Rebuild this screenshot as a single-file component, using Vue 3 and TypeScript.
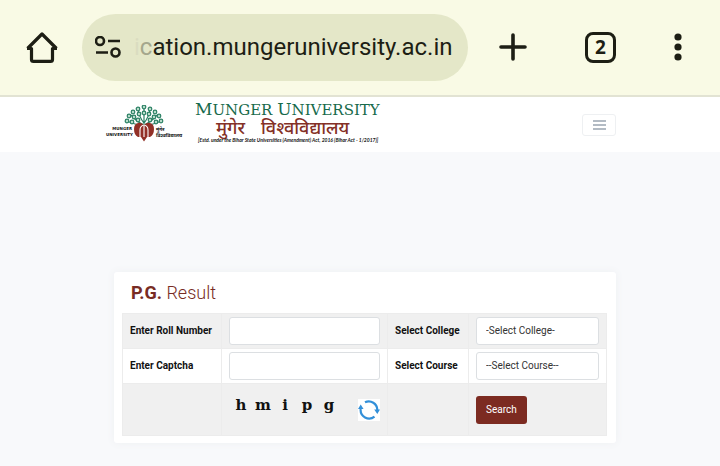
<script setup lang="ts">
import { ref } from 'vue'

const address = 'ication.mungeruniversity.ac.in'
const captcha = 'hmipg'
const rollNumber = ref('')
const captchaText = ref('')
const college = ref('')
const course = ref('')

const leaves: [number, number][] = [
  [3, 16], [5, 11], [9, 7], [10, 12], [14, 4], [15, 9], [14, 15], [20, 2],
  [20, 8], [26, 4], [25, 9], [26, 15], [31, 7], [30, 12], [35, 11],
  [37, 16], [8, 17], [32, 17],
]
</script>

<template>
  <div class="page">
    <header class="browser">
      <button class="icon" type="button" aria-label="Home">
        <svg width="32" height="32" viewBox="0 0 32 32" fill="none" stroke="currentColor" stroke-width="3.2" stroke-linejoin="round">
          <path d="M1 17.500H5.500V28.500Q5.500 30.400 7.500 30.400H24.500Q26.500 30.400 26.500 28.500V17.500H31M1.500 17.500 16 3 30.500 17.500" />
        </svg>
      </button>
      <div class="address">
        <svg width="26" height="22" viewBox="0 0 26 22" fill="none" stroke="currentColor" stroke-width="2.600">
          <circle cx="5" cy="5" r="4" /><path d="M13 5H25M1 16.500H13" /><circle cx="20.500" cy="16.500" r="4" />
        </svg>
        <span class="url"><span class="faint">{{ address.slice(0, 1) }}</span><span class="fade">{{ address.slice(1, 2) }}</span>{{ address.slice(2) }}</span>
      </div>
      <div class="actions">
        <button class="icon" type="button" aria-label="New tab">
          <svg width="28" height="28" viewBox="0 0 28 28" fill="none" stroke="currentColor" stroke-width="3.600" stroke-linecap="round"><path d="M14 2V26M2 14H26" /></svg>
        </button>
        <button class="icon tabs" type="button">2</button>
        <button class="icon" type="button" aria-label="Menu">
          <svg width="8" height="28" viewBox="0 0 8 28" fill="currentColor"><circle cx="4" cy="4" r="3.600" /><circle cx="4" cy="14" r="3.600" /><circle cx="4" cy="24" r="3.600" /></svg>
        </button>
      </div>
    </header>

    <nav class="site">
      <a class="brand" href="#">
        <span class="side left">MUNGER<br />UNIVERSITY</span>
        <svg class="tree" width="40" height="40" viewBox="0 0 40 40" fill="none">
          <g stroke="#2b8064" stroke-width="1.200">
            <path d="M20 20V4M20 20Q13 17 7 10M20 18Q15 12 14 4M20 20Q27 17 33 10M20 18Q25 12 26 4M19 20Q11 20 3 16M21 20Q29 20 37 16" />
            <circle v-for="([x, y], i) in leaves" :key="i" :cx="x" :cy="y" r="1.800" fill="#b9dccb" />
          </g>
          <path d="M20 20Q17 17 14 18Q10 19 10 24Q10 30 14 32H17L20 36.500L23 32H26Q30 30 30 24Q30 19 26 18Q23 17 20 20Z" fill="#923027" />
          <path d="M16 32V25Q16 21 20 20Q24 21 24 25V32M20 21V32" stroke="#fff" stroke-width="1.100" />
        </svg>
        <span class="side right">मुंगेर<br />विश्वविद्यालय</span>
        <span class="titles">
          <span class="name"><span class="cap">M</span>UNGER <span class="cap">U</span>NIVERSITY</span>
          <span class="hindi"><span>मुंगेर</span><span>विश्वविद्यालय</span></span>
          <span class="act">[Estd. under the Bihar State Universities (Amendment) Act, 2016 (Bihar Act - 1/2017)]</span>
        </span>
      </a>
      <button class="toggle" type="button" aria-label="Open navigation">
        <svg width="13" height="10" viewBox="0 0 13 10" stroke="#9ba5b1" stroke-width="1.700"><path d="M0 1H13M0 5H13M0 9H13" /></svg>
      </button>
    </nav>

    <main>
      <form class="card" @submit.prevent>
        <h1><b>P.G.</b> Result</h1>
        <table>
          <colgroup><col class="c1" /><col class="c2" /><col class="c3" /><col class="c4" /></colgroup>
          <tbody>
            <tr>
              <th><label for="roll">Enter Roll Number</label></th>
              <td><input id="roll" v-model="rollNumber" type="text" /></td>
              <th><label for="college">Select College</label></th>
              <td><select id="college" v-model="college"><option value="">-Select College-</option></select></td>
            </tr>
            <tr>
              <th><label for="captcha">Enter Captcha</label></th>
              <td><input id="captcha" v-model="captchaText" type="text" /></td>
              <th><label for="course">Select Course</label></th>
              <td><select id="course" v-model="course"><option value="">--Select Course--</option></select></td>
            </tr>
            <tr class="last">
              <td></td>
              <td>
                <div class="challenge">
                  <span class="letters"><span v-for="(c, i) in captcha" :key="i">{{ c }}</span></span>
                  <button class="refresh" type="button" aria-label="Refresh captcha">
                    <svg width="22" height="22" viewBox="0 0 22 22" fill="none" stroke="#3390d9" stroke-width="2.200">
                      <path d="M7 3.300A8.500 8.500 0 0 1 19.300 11M16.500 17.600A8.500 8.500 0 0 1 2.700 10" />
                      <path d="M16.200 10.500H22L19.300 15ZM0 10H5.600L2.700 5.500Z" fill="#3390d9" stroke="none" />
                    </svg>
                  </button>
                </div>
              </td>
              <td></td>
              <td><button class="search" type="submit">Search</button></td>
            </tr>
          </tbody>
        </table>
      </form>
    </main>
  </div>
</template>

<style>
body { margin: 0; background: #f8f9fb; }
</style>

<style scoped>
* { box-sizing: border-box; }
.page { min-height: 100vh; font-family: Roboto, "Noto Sans", sans-serif; color: #111; }
button { font: inherit; cursor: pointer; }
.browser {
  display: flex; align-items: center; height: 97px; padding: 0 38px 1px 26px;
  background: #f9fae5; border-bottom: 2px solid #e2e3d3; color: #1d1e14;
}
.icon { display: flex; align-items: center; justify-content: center; padding: 0; border: 0; background: none; color: inherit; }
.address {
  display: flex; align-items: center; gap: 13px; flex: 1; height: 67px;
  margin-left: 24px; padding: 0 13px; border-radius: 34px; background: #e4e7c8;
}
.address svg { flex: none; }
.url { font-size: 24px; line-height: 32px; white-space: nowrap; }
.faint { color: #dadcc0; }
.fade { color: #a5a78d; }
.actions { display: flex; align-items: center; justify-content: space-between; width: 183px; margin-left: 31px; }
.tabs { width: 31px; height: 31px; border: 3px solid currentColor; border-radius: 8px; font: 700 19px/24px "Open Sans", sans-serif; }
.site { display: flex; align-items: center; justify-content: space-between; height: 55px; padding: 0 104px 0 106px; background: #fff; }
.brand { display: flex; align-items: center; color: inherit; text-decoration: none; }
.side { width: 26px; padding-top: 15px; font: 700 4px/6px "DejaVu Sans", "Noto Sans", sans-serif; white-space: nowrap; }
.left { text-align: right; }
.right { font-size: 5px; }
.tree { margin: 0 -8px; }
.titles { display: flex; flex-direction: column; margin-left: 13px; padding-bottom: 2px; white-space: nowrap; }
.name { color: #176a4b; font: 15px/12px "DejaVu Serif", serif; }
.cap { font-size: 17px; }
.hindi { display: flex; gap: 16px; padding: 2px 0 0 21px; color: #843026; font: 500 18px/18px "Noto Sans", sans-serif; }
.act { padding-left: 3px; font: italic 700 5px/8px Lato, sans-serif; }
.toggle { display: flex; align-items: center; justify-content: center; width: 34px; height: 22px; padding: 0; border: 1px solid #eef0f2; border-radius: 3px; background: #fff; }
main { padding: 120px 104px 22px 114px; }
.card { padding: 8px 9px 7px 8px; border-radius: 3px; background: #fff; box-shadow: 0 0 8px #eef0f2; }
h1 { margin: 0; padding: 0 9px; color: #782c24; font-size: 18px; font-weight: 300; line-height: 26px; }
h1 b { font-weight: 700; }
table { width: 100%; margin-top: 7px; border-collapse: collapse; table-layout: fixed; font-size: 10px; }
.c1 { width: 99px; }
.c2 { width: 166px; }
.c3 { width: 81px; }
th, td { height: 35px; padding: 0 7px; border: 1px solid #ececec; text-align: left; }
th { padding-bottom: 1px; font-weight: 700; white-space: nowrap; }
tr:nth-child(odd) { background: #f0f0f0; }
.last td { height: 52px; }
input, select {
  display: block; width: 100%; height: 28px; padding: 0 9px; border: 1px solid #dcdfe2; border-radius: 3px;
  background: #fff; color: #333; font: 10px/14px Roboto, sans-serif; appearance: none;
}
.challenge { display: flex; align-items: center; justify-content: space-between; }
.letters { display: grid; grid-template-columns: repeat(5, 22px); padding: 0 0 10px 1px; font: 700 15px/20px "DejaVu Serif", serif; text-align: center; }
.refresh { display: flex; padding: 0; border: 0; background: #fff; }
.search { display: block; height: 28px; padding: 0 10px; border: 0; border-radius: 3px; background: #7c2b21; color: #fff; }
</style>
